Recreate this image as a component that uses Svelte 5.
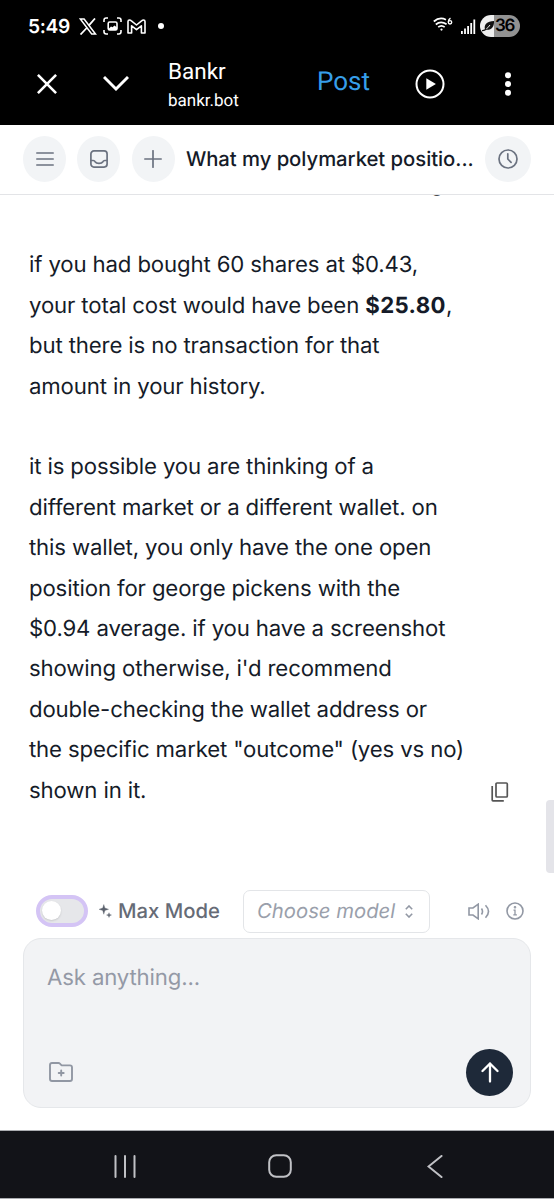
<script lang="ts">
	const message = [
		[
			'if you had bought 60 shares at $0.43,',
			'your total cost would have been **$25.80**,',
			'but there is no transaction for that',
			'amount in your history.'
		],
		[
			'it is possible you are thinking of a',
			'different market or a different wallet. on',
			'this wallet, you only have the one open',
			'position for george pickens with the',
			'$0.94 average. if you have a screenshot',
			"showing otherwise, i'd recommend",
			'double-checking the wallet address or',
			'the specific market "outcome" (yes vs no)',
			'shown in it.'
		]
	];
	const bars = [3, 5.5, 8, 11, 14.5];
</script>

<div class="screen">
	<div class="status">
		<span class="time">5:49</span>
		<svg class="x" width="18" height="17" viewBox="0 0 18 17" fill="none" stroke="#fff" stroke-width="1.5">
			<path d="M1.3 1h3.8l11.4 15h-3.8z" />
			<path d="M16 .5 9.7 7.6M7.7 10 1.5 16.5" stroke-width="1.8" />
		</svg>
		<svg class="shot" width="19" height="18" viewBox="0 0 19 18" fill="none" stroke="#fff" stroke-width="1.6">
			<path d="M1 5V3.2Q1 1 3.2 1H5M14 1h1.8Q18 1 18 3.2V5M18 13v1.8q0 2.2-2.2 2.2H14M5 17H3.2Q1 17 1 14.8V13" />
			<rect x="5.2" y="5" width="8.8" height="8" rx="1.5" />
			<path d="m5.500 12 2.500-2.500 1.500.8 2-1.800 2.500 2V13H5.500z" fill="#fff" stroke="none" />
		</svg>
		<svg class="mail" width="19" height="15" viewBox="0 0 19 15" fill="none" stroke="#fff" stroke-width="1.6">
			<path d="M1 14V2.600Q1 1 2.600 1q.8 0 1.500.6L9.500 6l5.400-4.400Q15.600 1 16.400 1 18 1 18 2.600V14h-3.600V6.800L9.500 10.600 4.600 6.800V14z" stroke-linejoin="round" />
		</svg>
		<i class="dot"></i>
		<svg class="wifi" width="20" height="15" viewBox="0 0 20 15" fill="none" stroke="#fff" stroke-width="1.7">
			<path d="M.8 4.500Q6.500-.5 13 2.700M2.800 7.500q5-4.200 10.800-.2M5.200 10.200q3.300-2.700 6.500 0" />
			<circle cx="8.5" cy="12.6" r="1.1" fill="#fff" stroke="none" />
			<path d="M17.500 1.200q-2 1.300-2.200 3.500" stroke-width="1.4" />
			<circle cx="17" cy="5.3" r="1.7" stroke-width="1.4" />
		</svg>
		<svg class="signal" width="15" height="15" viewBox="0 0 15 15" fill="#fff">
			{#each bars as h, i}
				<rect x={i * 3.1} y={15 - h} width="1.8" height={h} />
			{/each}
		</svg>
		<div class="battery">
			<svg width="13" height="12" viewBox="0 0 13 12">
				<path d="M3 9.500C1.500 4.500 5 1.500 12 1c.3 5.500-2.500 9-7 8.800z" fill="#111" />
				<path d="M3.500 9.500Q6 8 8 5" fill="none" stroke="#eee" stroke-width="1" />
				<path d="M0 10.600q2.500.2 4.500-1.800" fill="none" stroke="#111" stroke-width="1.3" />
			</svg>
			<span>36</span>
		</div>
	</div>

	<div class="appbar">
		<svg class="close" width="20" height="20" viewBox="0 0 20 20" fill="none" stroke="#fff" stroke-width="2.6">
			<path d="m.9.9 18.200 18.200M19.100.9.9 19.100" />
		</svg>
		<svg class="down" width="26" height="15" viewBox="0 0 26 15" fill="none" stroke="#fff" stroke-width="2.9">
			<path d="m1 1 12 12L25 1" />
		</svg>
		<div class="site">
			<b>Bankr</b>
			<small>bankr.bot</small>
		</div>
		<span class="post">Post</span>
		<svg class="play" width="30" height="30" viewBox="0 0 30 30" fill="none" stroke="#fff" stroke-width="2">
			<circle cx="15" cy="15" r="13.5" />
			<path d="m11.300 9.300 9.600 5.700-9.600 5.700z" fill="#fff" stroke="none" />
		</svg>
		<svg class="more" width="6" height="24" viewBox="0 0 6 24" fill="#fff">
			<circle cx="3" cy="3.2" r="3" /><circle cx="3" cy="12" r="3" /><circle cx="3" cy="20.8" r="3" />
		</svg>
	</div>

	<header>
		<button aria-label="Menu">
			<svg width="18" height="16" viewBox="0 0 18 16"><path d="M.8 2h16.400M.8 8h16.400M.8 14h16.400" /></svg>
		</button>
		<button aria-label="Inbox">
			<svg width="18" height="18" viewBox="0 0 18 18">
				<rect x=".9" y=".9" width="16.2" height="16.2" rx="3" />
				<path d="M1 10.500h2.200q1.300 0 1.900 1.200 1 1.700 3.900 1.700t3.900-1.700q.6-1.200 1.900-1.200H17" />
			</svg>
		</button>
		<button aria-label="New">
			<svg width="18" height="18" viewBox="0 0 18 18"><path d="M.8 9h16.400M9 .8v16.400" /></svg>
		</button>
		<h1>What my polymarket positio...</h1>
		<button class="history" aria-label="History">
			<svg width="20" height="20" viewBox="0 0 20 20"><circle cx="10" cy="10" r="9" /><path d="M9.800 4.800V10l3.300 3.300" /></svg>
		</button>
	</header>

	<main>
		<p class="scrolled">g</p>
		{#each message as paragraph}
			<p>
				{#each paragraph as line}
					<span class="line">
						{#each line.split('**') as part, i}{#if i % 2}<strong>{part}</strong>{:else}{part}{/if}{/each}
					</span>
				{/each}
			</p>
		{/each}
		<svg class="copy" width="18" height="20" viewBox="0 0 18 20" fill="none" stroke="#555" stroke-width="1.7">
			<rect x="5" y="1" width="11.3" height="14" rx="1" />
			<path d="M1.200 4v14q0 .8.8.8h10.800" />
		</svg>
		<i class="thumb"></i>
	</main>

	<div class="options">
		<span class="toggle"></span>
		<svg class="sparkle" width="13" height="14" viewBox="0 0 13 14" fill="#5b616d" stroke="#5b616d" stroke-width=".3">
			<path d="M4.800.5 5.900 4 9.600 5.300 5.900 6.600 4.800 10.300 3.700 6.600 0 5.300 3.700 4zM10 8.700l.7 1.700 1.800.6-1.800.7-.7 1.800-.7-1.800-1.800-.7 1.800-.6z" />
		</svg>
		<span class="max">Max Mode</span>
		<div class="select">
			<em>Choose model</em>
			<svg width="8" height="13" viewBox="0 0 8 13"><path d="m.8 4.200 3.200-3.200 3.200 3.200M.8 8.800 4 12l3.200-3.200" /></svg>
		</div>
		<svg class="sound" width="22" height="17" viewBox="0 0 22 17">
			<path d="M1 5h4l5.200-3.800v14.600L5 12H1zM13.500 5.500q2 3 0 6M17.500 2.300q6 6.200 0 12.400" />
		</svg>
		<svg class="info" width="18" height="18" viewBox="0 0 18 18">
			<circle cx="9" cy="9" r="8" /><path d="M7.500 8.200H9v4.500M7.300 12.900h3.600" stroke-width="1.3" /><circle cx="9" cy="5.2" r=".5" />
		</svg>
	</div>

	<div class="composer">
		<div class="placeholder">Ask anything...</div>
		<div class="actions">
			<svg width="24" height="20" viewBox="0 0 24 20" fill="none" stroke="#9197a3" stroke-width="1.9" stroke-linecap="round" stroke-linejoin="round">
				<path d="M1 3q0-2 2-2h6.500q.8 0 1.400.6l1.200 1.200q.6.6 1.400.6H21q2 0 2 2V17q0 2-2 2H3q-2 0-2-2z" />
				<path d="M12.200 8.500v5M9.700 11h5" />
			</svg>
			<button aria-label="Send">
				<svg width="18" height="21" viewBox="0 0 18 21" fill="none" stroke="#fff" stroke-width="2.3" stroke-linecap="round" stroke-linejoin="round">
					<path d="M9 19.500V1.500M1.500 9 9 1.500 16.500 9" />
				</svg>
			</button>
		</div>
	</div>

	<nav>
		<svg width="22" height="23" viewBox="0 0 22 23"><path d="M1.500 1v21M11 1v21M20.500 1v21" /></svg>
		<svg class="home" width="24" height="24" viewBox="0 0 24 24"><rect x="1.2" y="1.2" width="21.6" height="21.6" rx="7" /></svg>
		<svg width="16" height="23" viewBox="0 0 16 23"><path d="M14.500 1 1.500 11.500l13 10.500" /></svg>
	</nav>
</div>

<style>
	:global(body) {
		background: #fff;
	}

	.screen {
		width: 554px;
		height: 1200px;
		display: flex;
		flex-direction: column;
		overflow: hidden;
		font-family: Inter, sans-serif;
		text-rendering: geometricPrecision;
		color: #151b28;
	}

	svg {
		display: block;
		flex: none;
	}

	.status {
		height: 52px;
		box-sizing: border-box;
		display: flex;
		align-items: center;
		padding: 0 34px 0 28px;
		background: #000;
		color: #fff;
	}

	.time {
		width: 51px;
		font-size: 19.2px;
		font-weight: 600;
		letter-spacing: -0.3px;
	}

	.shot {
		margin-left: 6px;
	}

	.mail {
		margin-left: 5px;
	}

	.dot {
		width: 6px;
		height: 6px;
		margin-left: 12px;
		border-radius: 50%;
		background: #fff;
	}

	.wifi {
		margin: -4px 0 0 auto;
	}

	.signal {
		margin-left: 8px;
	}

	.battery {
		display: flex;
		align-items: center;
		width: 40px;
		height: 22px;
		margin-left: 4px;
		box-sizing: border-box;
		padding-left: 2px;
		border-radius: 11px;
		background: linear-gradient(90deg, #eee 14px, #929292 14px);
		color: #000;
		font-size: 17px;
		font-weight: 600;
		letter-spacing: -1.2px;
	}

	.appbar {
		height: 73px;
		display: flex;
		align-items: center;
		background: #000;
		color: #fff;
		font-family: Roboto, sans-serif;
	}

	.close {
		margin: -10px 0 0 37px;
	}

	.down {
		margin: -10px 0 0 46px;
	}

	.site {
		width: 149px;
		margin: -3px 0 0 39px;
	}

	.site b,
	.site small {
		display: block;
		font-weight: 400;
	}

	.site b {
		font-size: 22.5px;
		line-height: 28px;
	}

	.site small {
		font-size: 17px;
		line-height: 30px;
	}

	.post {
		width: 98px;
		margin-top: -14px;
		color: #369ee9;
		font-size: 26px;
	}

	.play {
		margin-top: -10px;
	}

	.more {
		margin: -10px 0 0 60px;
	}

	header {
		position: relative;
		z-index: 1;
		height: 70px;
		box-sizing: border-box;
		display: flex;
		align-items: center;
		padding: 0 23px 2px;
		border-bottom: 1px solid #e3e4e7;
		background: #fff;
	}

	button {
		flex: none;
		display: grid;
		place-items: center;
		padding: 0;
		border: 0;
	}

	header button {
		width: 43px;
		height: 46px;
		margin-right: 11.3px;
		border-radius: 50%;
		background: #f2f4f6;
	}

	header button svg {
		fill: none;
		stroke: #6b7280;
		stroke-width: 1.7;
		stroke-linecap: round;
	}

	header .history {
		width: 46px;
		margin: 0 0 0 auto;
	}

	h1 {
		margin: 0;
		font-size: 20.3px;
		font-weight: 500;
		letter-spacing: -0.05px;
		white-space: nowrap;
	}

	main {
		position: relative;
		height: 694px;
		padding-left: 29px;
		font-size: 22.2px;
		line-height: 40.4px;
		letter-spacing: -0.14px;
	}

	main p {
		margin: 0 0 40.4px;
		white-space: nowrap;
	}

	main .scrolled {
		margin: -30.7px 0 40.7px 401px;
	}

	.line {
		display: block;
	}

	strong {
		font-weight: 700;
		letter-spacing: 0.4px;
	}

	.copy {
		position: absolute;
		left: 490.5px;
		top: 587px;
	}

	.thumb {
		position: absolute;
		right: 0;
		top: 605px;
		width: 8px;
		height: 73px;
		border-radius: 4px 0 0 4px;
		background: #e4e4e9;
	}

	.options {
		display: flex;
		align-items: center;
		height: 44px;
		padding: 0 30px 0 36px;
	}

	.toggle {
		box-sizing: border-box;
		width: 52px;
		height: 32px;
		padding: 2px;
		border: 4px solid #d4c4f5;
		border-radius: 16px;
		background: #e6e7ea;
	}

	.toggle::before {
		content: '';
		display: block;
		width: 19px;
		height: 19px;
		border-radius: 50%;
		background: #fff;
		box-shadow: 0 1px 2px #0002;
	}

	.sparkle {
		margin-left: 11px;
	}

	.max {
		width: 125px;
		margin: -2px 0 0 6px;
		color: #666b76;
		font-size: 20.3px;
		font-weight: 500;
		white-space: nowrap;
	}

	.select {
		display: flex;
		align-items: center;
		width: 187px;
		height: 43px;
		box-sizing: border-box;
		padding-left: 13px;
		border: 1px solid #e3e5e8;
		border-radius: 7px;
		color: #9a9fab;
		font-size: 20.3px;
	}

	.select em {
		width: 138px;
		margin: -2px 9.5px 0 0;
		white-space: nowrap;
	}

	.select svg,
	.sound,
	.info {
		fill: none;
		stroke: #9298a4;
		stroke-width: 1.6;
	}

	.sound {
		margin-left: auto;
	}

	.info {
		margin-left: 16px;
	}

	.composer {
		height: 170px;
		box-sizing: border-box;
		display: flex;
		flex-direction: column;
		justify-content: space-between;
		margin: 5px 23px 22px;
		padding: 25px 17px 11px 23px;
		border: 1px solid #e5e7ea;
		border-radius: 18px;
		background: #f2f3f5;
	}

	.placeholder {
		color: #9499a6;
		font-size: 22.2px;
		line-height: 28px;
		letter-spacing: -0.14px;
	}

	.actions {
		display: flex;
		align-items: center;
		justify-content: space-between;
	}

	.actions > svg {
		margin: -1px 0 0 2px;
	}

	.actions button {
		width: 47px;
		height: 47px;
		border-radius: 50%;
		background: #1e2939;
	}

	nav {
		flex: none;
		height: 69px;
		box-sizing: border-box;
		display: flex;
		align-items: center;
		justify-content: space-between;
		padding: 3px 111px 0 114px;
		border: solid #aaacb0;
		border-width: 1px 0;
		background: #121318;
	}

	nav svg {
		fill: none;
		stroke: #c0c1c5;
		stroke-width: 2;
		stroke-linecap: round;
	}

	.home {
		margin-right: 3px;
	}
</style>
